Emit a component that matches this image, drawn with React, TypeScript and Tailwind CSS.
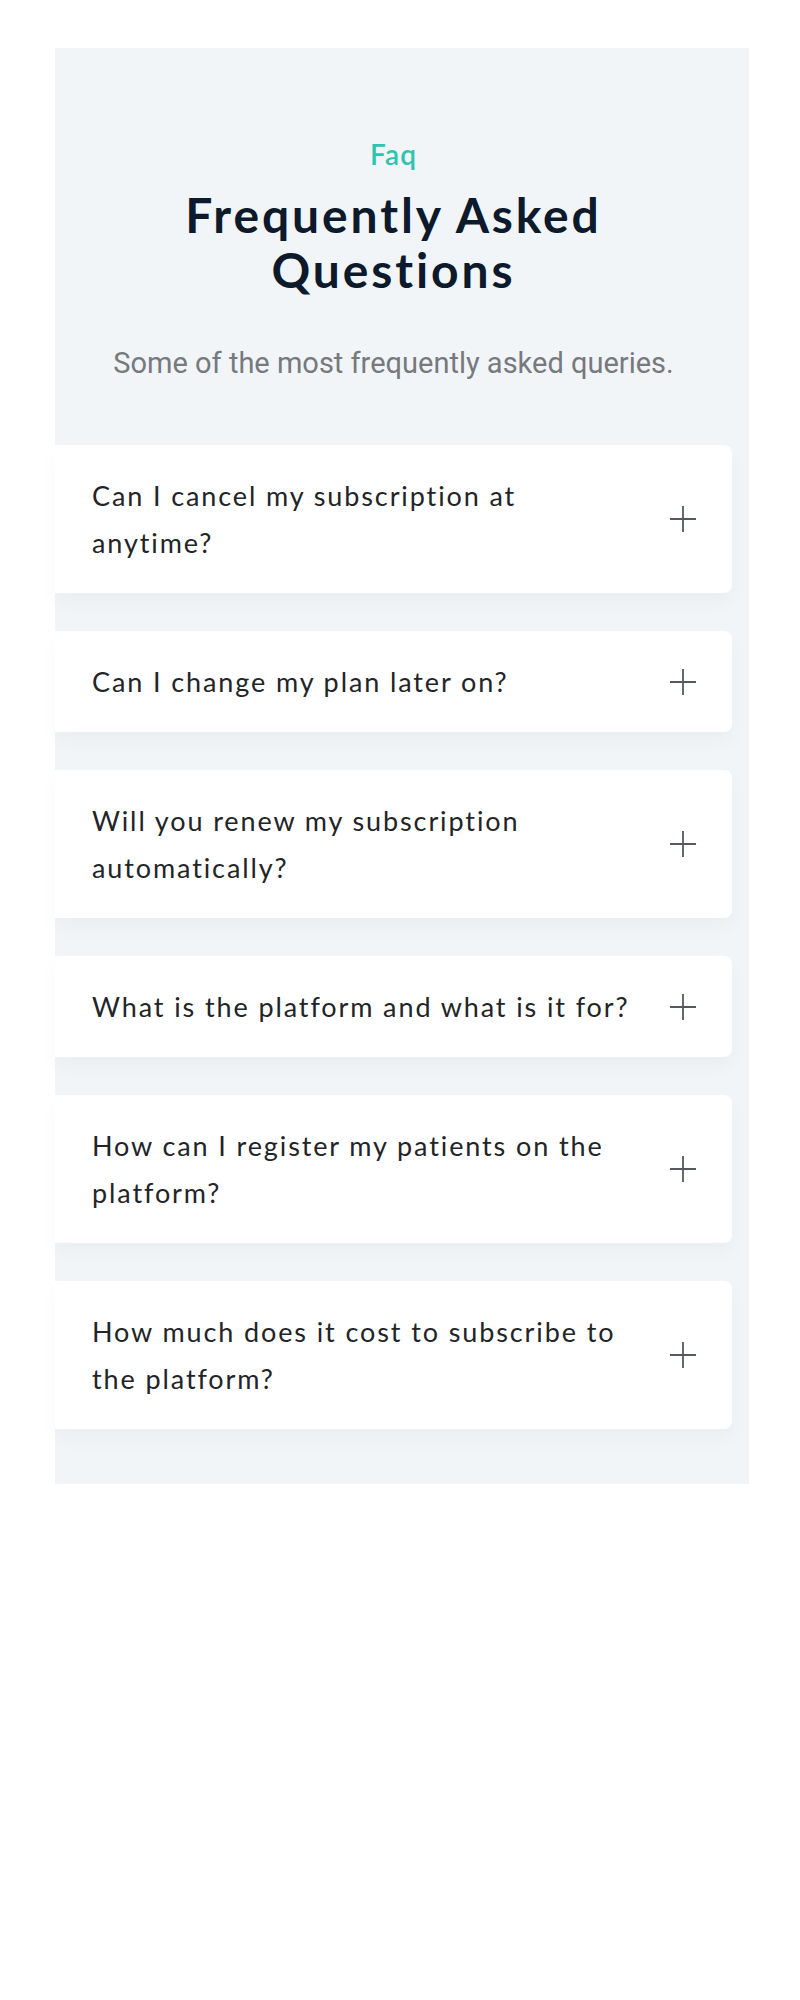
const questions = [
  'Can I cancel my subscription at anytime?',
  'Can I change my plan later on?',
  'Will you renew my subscription automatically?',
  'What is the platform and what is it for?',
  'How can I register my patients on the platform?',
  'How much does it cost to subscribe to the platform?',
];

function PlusIcon() {
  return (
    <svg width="28" height="28" viewBox="0 0 28 28" className="shrink-0">
      <path d="M14 1v26M1 14h26" stroke="#555a5e" strokeWidth="1.8" fill="none" />
    </svg>
  );
}

export default function App() {
  return (
    <div className="min-h-screen bg-white pt-[48px]">
      <section className="ml-[55px] w-[694px] bg-[#f2f5f8] pt-[86px] pb-[55px]">
        <div className="w-[677px] flex flex-col">
          {/* Heading */}
          <div className="flex flex-col items-center text-center">
            <span className="font-['Lato',sans-serif] text-[28px] leading-[40px] font-semibold tracking-[0.04em] text-[#2ec4ae]">
              Faq
            </span>
            <h2 className="mt-[13px] font-['Lato',sans-serif] text-[48px] leading-[55px] font-bold tracking-[0.06em] text-[#0c1a2c]">
              Frequently Asked
              <br />
              Questions
            </h2>
            <p className="mt-[46px] font-['Roboto',sans-serif] text-[29px] leading-[40px] text-[#76797d]">
              Some of the most frequently asked queries.
            </p>
          </div>

          {/* Questions */}
          <div className="mt-[62px] flex flex-col gap-[38px]">
            {questions.map((q) => (
              <button
                key={q}
                className="flex items-center justify-between gap-[28px] bg-white rounded-r-lg pl-[37px] pr-[35px] py-[27px] text-left shadow-[0_10px_20px_rgba(15,23,42,0.03)]"
              >
                <span className="flex-1 font-['Lato',sans-serif] text-[27px] leading-[47px] tracking-[0.07em] text-[#222427]">
                  {q}
                </span>
                <PlusIcon />
              </button>
            ))}
          </div>
        </div>
      </section>
    </div>
  );
}
